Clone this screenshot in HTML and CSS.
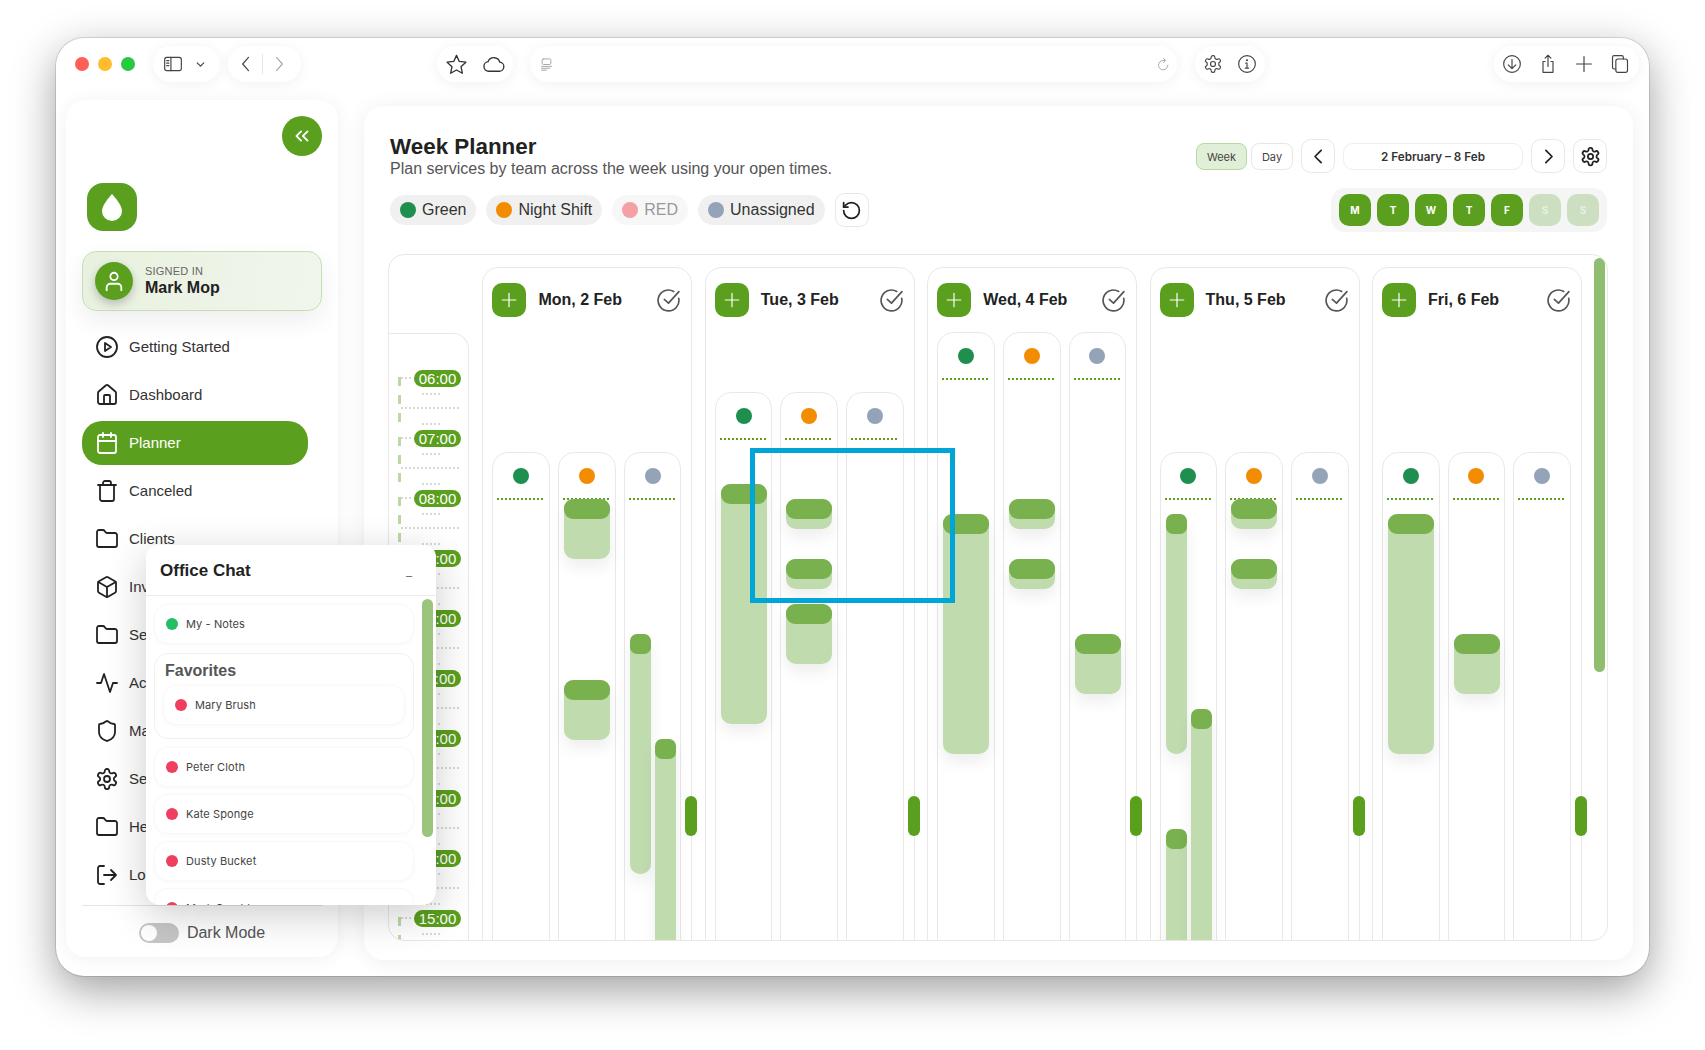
FILE: index.html
```html
<!DOCTYPE html>
<html lang="en">
<head>
    <meta charset="UTF-8">
    <meta name="viewport" content="width=device-width, initial-scale=1.0">
    <title>Week Planner</title>
    <link rel="stylesheet" href="styles.css">
</head>
<body>
    <!-- shared icons -->
    <svg class="defs" width="0" height="0">
        <symbol id="i-gear" viewBox="0 0 24 24"><path d="M12.22 2h-.44a2 2 0 0 0-2 2v.18a2 2 0 0 1-1 1.73l-.43.25a2 2 0 0 1-2 0l-.15-.08a2 2 0 0 0-2.73.73l-.22.38a2 2 0 0 0 .73 2.73l.15.1a2 2 0 0 1 1 1.72v.51a2 2 0 0 1-1 1.74l-.15.09a2 2 0 0 0-.73 2.73l.22.38a2 2 0 0 0 2.73.73l.15-.08a2 2 0 0 1 2 0l.43.25a2 2 0 0 1 1 1.73V20a2 2 0 0 0 2 2h.44a2 2 0 0 0 2-2v-.18a2 2 0 0 1 1-1.73l.43-.25a2 2 0 0 1 2 0l.15.08a2 2 0 0 0 2.73-.73l.22-.39a2 2 0 0 0-.73-2.73l-.15-.08a2 2 0 0 1-1-1.74v-.5a2 2 0 0 1 1-1.74l.15-.09a2 2 0 0 0 .73-2.73l-.22-.38a2 2 0 0 0-2.73-.73l-.15.08a2 2 0 0 1-2 0l-.43-.25a2 2 0 0 1-1-1.73V4a2 2 0 0 0-2-2z"/><circle cx="12" cy="12" r="3"/></symbol>
        <symbol id="i-folder" viewBox="0 0 24 24"><path d="M20 20a2 2 0 0 0 2-2V8a2 2 0 0 0-2-2h-7.9a2 2 0 0 1-1.69-.9L9.6 3.9A2 2 0 0 0 7.93 3H4a2 2 0 0 0-2 2v13a2 2 0 0 0 2 2Z"/></symbol>
        <symbol id="i-plus" viewBox="0 0 24 24"><path d="M12 3v18M3 12h18"/></symbol>
        <symbol id="i-check" viewBox="0 0 24 24"><path d="M21.8 10A10 10 0 1 1 17 3.3"/><path d="m8 11 4 3.5L22 3.5"/></symbol>
    </svg>

    <div class="window">
        <header class="toolbar">
            <div class="lights">
                <span class="light red"></span>
                <span class="light yellow"></span>
                <span class="light green"></span>
            </div>
            <div class="pill pill-side">
                <svg class="ico ico-tb" viewBox="0 0 24 24"><rect x="2" y="4" width="20" height="16" rx="2.5"/><path d="M9.5 4v16M4.5 8h2.5M4.5 11h2.5M4.5 14h2.5"/></svg>
                <svg class="ico ico-sm" viewBox="0 0 24 24"><path d="m6 9 6 6 6-6"/></svg>
            </div>
            <div class="pill pill-nav">
                <svg class="ico ico-tb" viewBox="0 0 24 24"><path d="m15 4-7 8 7 8"/></svg>
                <span class="pill-sep"></span>
                <svg class="ico ico-tb muted" viewBox="0 0 24 24"><path d="m9 4 7 8-7 8"/></svg>
            </div>
            <div class="pill pill-fav">
                <svg class="ico ico-fav" viewBox="0 0 24 24"><path d="m12 2.5 2.9 6.3 6.9.8-5.1 4.7 1.4 6.8-6.1-3.4-6.1 3.4 1.4-6.8-5.1-4.7 6.9-.8z"/></svg>
                <svg class="ico ico-fav" viewBox="0 0 24 24"><path d="M17.5 19H7a5 5 0 0 1-.7-9.95A6.5 6.5 0 0 1 18.6 9.6 4.7 4.7 0 0 1 17.5 19z"/></svg>
            </div>
            <div class="pill pill-url">
                <svg class="ico ico-url muted" viewBox="0 0 24 24"><rect x="5" y="3" width="14" height="9" rx="2"/><path d="M4 15h16M4 18h13M4 21h8"/></svg>
                <svg class="ico ico-url muted" viewBox="0 0 24 24"><path d="M19 13a7.5 7.5 0 1 1-7.5-7.5h3"/><path d="m12 2 3 3.5-3 3.5"/></svg>
            </div>
            <div class="pill pill-tools">
                <svg class="ico ico-tb"><use href="#i-gear"/></svg>
                <svg class="ico ico-tb" viewBox="0 0 24 24"><circle cx="12" cy="12" r="10"/><path d="M12 11v6M10 17h4M10.5 11H12"/><circle cx="12" cy="7.5" r=".6"/></svg>
            </div>
            <div class="pill pill-end">
                <svg class="ico ico-tb" viewBox="0 0 24 24"><circle cx="12" cy="12" r="10"/><path d="M12 6.5v11M7.500 13l4.500 4.500 4.500-4.500"/></svg>
                <svg class="ico ico-tb" viewBox="0 0 24 24"><path d="M8.500 9H6v13h12V9h-2.500M12 15V1.500M8.500 5 12 1.500 15.500 5"/></svg>
                <svg class="ico ico-tb"><use href="#i-plus"/></svg>
                <svg class="ico ico-tb" viewBox="0 0 24 24"><rect x="7" y="6" width="14" height="16" rx="2.500"/><path d="M7 18H5a2 2 0 0 1-2-2V4a2 2 0 0 1 2-2h9a2 2 0 0 1 2 2v2"/></svg>
            </div>
        </header>

        <div class="layout">
            <aside class="sidebar">
                <button class="collapse" type="button">
                    <svg class="ico ico-collapse" viewBox="0 0 24 24"><path d="m11 17-5-5 5-5M18 17l-5-5 5-5"/></svg>
                </button>
                <div class="logo">
                    <svg class="drop" viewBox="0 0 20 27"><path d="M10 0C10 0 0 10.500 0 17a10 10 0 0 0 20 0C20 10.500 10 0 10 0z"/></svg>
                </div>
                <div class="user-card">
                    <span class="avatar">
                        <svg class="ico ico-user" viewBox="0 0 24 24"><circle cx="12" cy="7" r="4"/><path d="M4 22v-3a4 4 0 0 1 4-4h8a4 4 0 0 1 4 4v3"/></svg>
                    </span>
                    <div>
                        <div class="user-hint">SIGNED IN</div>
                        <div class="user-name">Mark Mop</div>
                    </div>
                </div>

                <nav class="nav">
                    <a class="nav-item"><svg class="ico" viewBox="0 0 24 24"><circle cx="12" cy="12" r="10"/><path d="m10 8 6 4-6 4z"/></svg>Getting Started</a>
                    <a class="nav-item"><svg class="ico" viewBox="0 0 24 24"><path d="M15 21v-8a1 1 0 0 0-1-1h-4a1 1 0 0 0-1 1v8"/><path d="M3 10a2 2 0 0 1 .709-1.528l7-5.999a2 2 0 0 1 2.582 0l7 5.999A2 2 0 0 1 21 10v9a2 2 0 0 1-2 2H5a2 2 0 0 1-2-2z"/></svg>Dashboard</a>
                    <a class="nav-item active"><svg class="ico" viewBox="0 0 24 24"><rect x="3" y="4" width="18" height="18" rx="2"/><path d="M16 2v4M8 2v4M3 10h18"/></svg>Planner</a>
                    <a class="nav-item"><svg class="ico" viewBox="0 0 24 24"><path d="M3 6h18"/><path d="M19 6v14c0 1-1 2-2 2H7c-1 0-2-1-2-2V6"/><path d="M8 6V4c0-1 1-2 2-2h4c1 0 2 1 2 2v2"/></svg>Canceled</a>
                    <a class="nav-item"><svg class="ico"><use href="#i-folder"/></svg>Clients</a>
                    <a class="nav-item"><svg class="ico" viewBox="0 0 24 24"><path d="M21 8a2 2 0 0 0-1-1.730l-7-4a2 2 0 0 0-2 0l-7 4A2 2 0 0 0 3 8v8a2 2 0 0 0 1 1.730l7 4a2 2 0 0 0 2 0l7-4A2 2 0 0 0 21 16Z"/><path d="m3.300 7 8.700 5 8.700-5M12 22V12"/></svg>Inventory</a>
                    <a class="nav-item"><svg class="ico"><use href="#i-folder"/></svg>Services</a>
                    <a class="nav-item"><svg class="ico" viewBox="0 0 24 24"><path d="M22 12h-4l-3 9L9 3l-3 9H2"/></svg>Activity</a>
                    <a class="nav-item"><svg class="ico" viewBox="0 0 24 24"><path d="M20 13c0 5-3.500 7.500-7.660 8.950a1 1 0 0 1-.67-.01C7.500 20.500 4 18 4 13V6a1 1 0 0 1 1-1c2 0 4.500-1.200 6.240-2.720a1.170 1.170 0 0 1 1.520 0C14.510 3.810 17 5 19 5a1 1 0 0 1 1 1z"/></svg>Manage</a>
                    <a class="nav-item"><svg class="ico"><use href="#i-gear"/></svg>Settings</a>
                    <a class="nav-item"><svg class="ico"><use href="#i-folder"/></svg>Help</a>
                    <a class="nav-item"><svg class="ico" viewBox="0 0 24 24"><path d="M9 21H5a2 2 0 0 1-2-2V5a2 2 0 0 1 2-2h4"/><path d="m16 17 5-5-5-5M21 12H9"/></svg>Log out</a>
                </nav>

                <div class="dark-row">
                    <span class="toggle"><span class="knob"></span></span>
                    Dark Mode
                </div>
            </aside>

            <main class="planner">
                <div class="planner-head">
                    <div class="head-left">
                        <h1>Week Planner</h1>
                        <p class="subtitle">Plan services by team across the week using your open times.</p>
                        <div class="chips">
                            <span class="chip"><i class="dot dot-green"></i>Green</span>
                            <span class="chip"><i class="dot dot-orange"></i>Night Shift</span>
                            <span class="chip chip-off"><i class="dot dot-red"></i>RED</span>
                            <span class="chip"><i class="dot dot-grey"></i>Unassigned</span>
                            <button class="icon-btn" type="button">
                                <svg class="ico ico-btn" viewBox="0 0 24 24"><path d="M3 12a9 9 0 1 0 9-9 9.750 9.750 0 0 0-6.740 2.740L3 8"/><path d="M3 3v5h5"/></svg>
                            </button>
                        </div>
                    </div>
                    <div class="head-right">
                        <div class="controls">
                            <div class="view-switch">
                                <button class="view-btn on" type="button">Week</button>
                                <button class="view-btn" type="button">Day</button>
                            </div>
                            <button class="icon-btn" type="button"><svg class="ico ico-btn" viewBox="0 0 24 24"><path d="m15 5-7 7 7 7"/></svg></button>
                            <div class="date-range">2 February – 8 Feb</div>
                            <button class="icon-btn" type="button"><svg class="ico ico-btn" viewBox="0 0 24 24"><path d="m9 5 7 7-7 7"/></svg></button>
                            <button class="icon-btn" type="button"><svg class="ico ico-btn"><use href="#i-gear"/></svg></button>
                        </div>
                        <div class="weekdays">
                            <span class="wd">M</span>
                            <span class="wd">T</span>
                            <span class="wd">W</span>
                            <span class="wd">T</span>
                            <span class="wd">F</span>
                            <span class="wd off">S</span>
                            <span class="wd off">S</span>
                        </div>
                    </div>
                </div>

                <div class="grid">
                    <div class="times">
                        <div class="hour"><span class="time">06:00</span></div>
                        <div class="hour"><span class="time">07:00</span></div>
                        <div class="hour"><span class="time">08:00</span></div>
                        <div class="hour"><span class="time">09:00</span></div>
                        <div class="hour"><span class="time">10:00</span></div>
                        <div class="hour"><span class="time">11:00</span></div>
                        <div class="hour"><span class="time">12:00</span></div>
                        <div class="hour"><span class="time">13:00</span></div>
                        <div class="hour"><span class="time">14:00</span></div>
                        <div class="hour"><span class="time">15:00</span></div>
                    </div>

                    <div class="days">
                        <section class="day">
                            <div class="day-head">
                                <button class="add" type="button"><svg class="ico ico-plus"><use href="#i-plus"/></svg></button>
                                <span class="day-name">Mon, 2 Feb</span>
                                <svg class="ico ico-check"><use href="#i-check"/></svg>
                            </div>
                            <div class="teams start-8">
                                <div class="team"><i class="dot dot-green"></i></div>
                                <div class="team"><i class="dot dot-orange"></i>
                                    <div class="event wide" style="top:46px;height:60px"><b></b></div>
                                    <div class="event wide" style="top:227px;height:60px"><b></b></div>
                                </div>
                                <div class="team"><i class="dot dot-grey"></i>
                                    <div class="event slim" style="top:181px;height:240px"><b></b></div>
                                    <div class="event slim second" style="top:286px;height:260px"><b></b></div>
                                </div>
                            </div>
                            <span class="tab"></span>
                        </section>

                        <section class="day">
                            <div class="day-head">
                                <button class="add" type="button"><svg class="ico ico-plus"><use href="#i-plus"/></svg></button>
                                <span class="day-name">Tue, 3 Feb</span>
                                <svg class="ico ico-check"><use href="#i-check"/></svg>
                            </div>
                            <div class="teams start-7">
                                <div class="team"><i class="dot dot-green"></i>
                                    <div class="event wide" style="top:91px;height:240px"><b></b></div>
                                </div>
                                <div class="team"><i class="dot dot-orange"></i>
                                    <div class="event wide" style="top:106px;height:30px"><b></b></div>
                                    <div class="event wide" style="top:166px;height:30px"><b></b></div>
                                    <div class="event wide" style="top:211px;height:60px"><b></b></div>
                                </div>
                                <div class="team"><i class="dot dot-grey"></i></div>
                            </div>
                            <span class="tab"></span>
                        </section>

                        <section class="day">
                            <div class="day-head">
                                <button class="add" type="button"><svg class="ico ico-plus"><use href="#i-plus"/></svg></button>
                                <span class="day-name">Wed, 4 Feb</span>
                                <svg class="ico ico-check"><use href="#i-check"/></svg>
                            </div>
                            <div class="teams start-6">
                                <div class="team"><i class="dot dot-green"></i>
                                    <div class="event wide" style="top:181px;height:240px"><b></b></div>
                                </div>
                                <div class="team"><i class="dot dot-orange"></i>
                                    <div class="event wide" style="top:166px;height:30px"><b></b></div>
                                    <div class="event wide" style="top:226px;height:30px"><b></b></div>
                                </div>
                                <div class="team"><i class="dot dot-grey"></i>
                                    <div class="event wide" style="top:301px;height:60px"><b></b></div>
                                </div>
                            </div>
                            <span class="tab"></span>
                        </section>

                        <section class="day">
                            <div class="day-head">
                                <button class="add" type="button"><svg class="ico ico-plus"><use href="#i-plus"/></svg></button>
                                <span class="day-name">Thu, 5 Feb</span>
                                <svg class="ico ico-check"><use href="#i-check"/></svg>
                            </div>
                            <div class="teams start-8">
                                <div class="team"><i class="dot dot-green"></i>
                                    <div class="event slim" style="top:61px;height:240px"><b></b></div>
                                    <div class="event slim" style="top:376px;height:160px"><b></b></div>
                                    <div class="event slim second" style="top:256px;height:280px"><b></b></div>
                                </div>
                                <div class="team"><i class="dot dot-orange"></i>
                                    <div class="event wide" style="top:46px;height:30px"><b></b></div>
                                    <div class="event wide" style="top:106px;height:30px"><b></b></div>
                                </div>
                                <div class="team"><i class="dot dot-grey"></i></div>
                            </div>
                            <span class="tab"></span>
                        </section>

                        <section class="day">
                            <div class="day-head">
                                <button class="add" type="button"><svg class="ico ico-plus"><use href="#i-plus"/></svg></button>
                                <span class="day-name">Fri, 6 Feb</span>
                                <svg class="ico ico-check"><use href="#i-check"/></svg>
                            </div>
                            <div class="teams start-8">
                                <div class="team"><i class="dot dot-green"></i>
                                    <div class="event wide" style="top:61px;height:240px"><b></b></div>
                                </div>
                                <div class="team"><i class="dot dot-orange"></i>
                                    <div class="event wide" style="top:181px;height:60px"><b></b></div>
                                </div>
                                <div class="team"><i class="dot dot-grey"></i></div>
                            </div>
                            <span class="tab"></span>
                        </section>
                    </div>
                    <span class="grid-scroll"></span>
                </div>
            </main>
        </div>

        <!-- floating chat -->
        <div class="chat">
            <div class="chat-head">
                <span class="chat-title">Office Chat</span>
                <span class="chat-min">–</span>
            </div>
            <div class="chat-list">
                <div class="chat-row"><i class="status on"></i>My - Notes</div>
                <div class="favs">
                    <div class="favs-title">Favorites</div>
                    <div class="chat-row"><i class="status"></i>Mary Brush</div>
                </div>
                <div class="chat-row"><i class="status"></i>Peter Cloth</div>
                <div class="chat-row"><i class="status"></i>Kate Sponge</div>
                <div class="chat-row"><i class="status"></i>Dusty Bucket</div>
                <div class="chat-row"><i class="status"></i>Mark Scrubber</div>
            </div>
            <span class="chat-scroll"></span>
        </div>

        <!-- highlight drawn over the screenshot -->
        <div class="highlight"></div>
    </div>
</body>
</html>
```

FILE: styles.css
```css
* {
    box-sizing: border-box;
}
html, body {
    margin: 0;
    height: 1050px;
    overflow: hidden;
}
body {
    padding: 38px 56px 0;
    background-color: #fff;
    font-family: "Liberation Sans", Arial, sans-serif;
    color: #222;
}
.defs {
    position: absolute;
}
button {
    padding: 0;
    font-family: inherit;
    cursor: pointer;
}

/* icons */
.ico {
    width: 24px;
    height: 24px;
    flex: none;
    fill: none;
    stroke: currentColor;
    stroke-width: 2;
    stroke-linecap: round;
    stroke-linejoin: round;
}
.ico-tb {
    width: 20px;
    height: 20px;
    stroke-width: 1.4;
    color: #444;
}
.ico-fav {
    width: 23px;
    height: 23px;
    stroke-width: 1.4;
    color: #333;
}
.ico-sm {
    width: 13px;
    height: 13px;
    stroke-width: 2.2;
    color: #444;
}
.ico-url {
    width: 15px;
    height: 17px;
    stroke-width: 1.6;
}
.muted {
    color: #aaa;
}

/* window */
.window {
    position: relative;
    width: 1593px;
    height: 938px;
    border-radius: 28px;
    background-color: #fff;
    box-shadow: 0 0 0 1px rgba(0, 0, 0, 0.12), 0 14px 44px rgba(0, 0, 0, 0.38);
}
.toolbar {
    display: flex;
    align-items: flex-start;
    height: 62px;
    padding-top: 8px;
}
.lights {
    display: flex;
    gap: 9px;
    margin: 11px 0 0 19px;
}
.light {
    width: 14px;
    height: 14px;
    border-radius: 50%;
}
.red {
    background-color: #ff5f57;
}
.yellow {
    background-color: #febc2e;
}
.green {
    background-color: #28c840;
}
.pill {
    display: flex;
    align-items: center;
    height: 36px;
    border-radius: 18px;
    background-color: #fff;
    box-shadow: 0 2px 14px rgba(0, 0, 0, 0.06);
}
.pill-side {
    width: 67px;
    margin-left: 18px;
    padding-left: 10px;
    gap: 11px;
}
.pill-nav {
    width: 73px;
    margin-left: 8px;
    padding-left: 8px;
    gap: 6px;
}
.pill-sep {
    width: 1px;
    height: 20px;
    background-color: #e6e6e6;
}
.pill-fav {
    width: 76px;
    margin-left: 136px;
    padding-left: 8px;
    gap: 14px;
}
.pill-url {
    width: 647px;
    margin-left: 17px;
    padding: 0 6px 0 9px;
    justify-content: space-between;
}
.pill-tools {
    width: 70px;
    margin-left: 18px;
    padding-left: 8px;
    gap: 14px;
}
.pill-end {
    width: 145px;
    margin-left: 229px;
    padding-left: 8px;
    gap: 16px;
}

.layout {
    display: flex;
    align-items: flex-start;
}

/* sidebar */
.sidebar {
    display: flex;
    flex-direction: column;
    width: 272px;
    height: 857px;
    margin-left: 10px;
    border-radius: 20px;
    background-color: #fff;
    box-shadow: 0 2px 20px rgba(0, 0, 0, 0.06);
}
.collapse {
    display: flex;
    align-items: center;
    justify-content: center;
    width: 40px;
    height: 40px;
    margin: 16px 0 0 216px;
    border: none;
    border-radius: 50%;
    background-color: #5a9f1d;
    color: #fff;
}
.ico-collapse {
    width: 22px;
    height: 22px;
}
.logo {
    display: flex;
    align-items: center;
    justify-content: center;
    width: 50px;
    height: 48px;
    margin: 27px 0 0 21px;
    border-radius: 16px;
    background-color: #5a9f1d;
}
.drop {
    width: 20px;
    height: 27px;
    fill: #fff;
}
.user-card {
    display: flex;
    align-items: center;
    gap: 12px;
    width: 240px;
    height: 60px;
    margin: 20px 0 0 16px;
    padding-left: 12px;
    border: 1px solid #c5dfb2;
    border-radius: 14px;
    background: linear-gradient(100deg, #e8f1df, #f1f6ec);
    box-shadow: 0 10px 24px rgba(0, 0, 0, 0.07);
}
.avatar {
    display: flex;
    align-items: center;
    justify-content: center;
    width: 38px;
    height: 38px;
    border-radius: 50%;
    background-color: #5a9f1d;
    color: #fff;
    box-shadow: 0 4px 10px rgba(0, 0, 0, 0.22);
}
.ico-user {
    width: 22px;
    height: 22px;
}
.user-hint {
    font-size: 11px;
    line-height: 13px;
    letter-spacing: 0.2px;
    color: #666;
}
.user-name {
    font-size: 16px;
    line-height: 19px;
    font-weight: bold;
    color: #222;
}
.nav {
    display: flex;
    flex-direction: column;
    gap: 4px;
    width: 240px;
    margin: 14px 0 0 16px;
    padding-bottom: 8px;
    border-bottom: 1px solid #e4e4e4;
}
.nav-item {
    display: flex;
    align-items: center;
    gap: 10px;
    width: 226px;
    height: 44px;
    padding-left: 13px;
    border-radius: 20px;
    font-size: 15px;
    line-height: 16px;
    color: #333;
}
.nav-item .ico {
    stroke-width: 1.8;
    color: #222;
}
.nav-item.active {
    background-color: #5a9f1d;
    color: #fff;
}
.nav-item.active .ico {
    color: #fff;
}
.dark-row {
    display: flex;
    align-items: center;
    justify-content: center;
    gap: 8px;
    margin-top: 17px;
    font-size: 16px;
    color: #555;
}
.toggle {
    display: flex;
    align-items: center;
    width: 40px;
    height: 20px;
    padding-left: 2px;
    border-radius: 10px;
    background-color: #c6c6c6;
}
.knob {
    width: 16px;
    height: 16px;
    border-radius: 50%;
    background-color: #fff;
}

/* planner */
.planner {
    width: 1269px;
    height: 854px;
    margin: 6px 0 0 26px;
    padding: 29px 25px 0 24px;
    border-radius: 20px;
    background-color: #fff;
    box-shadow: 0 2px 22px rgba(0, 0, 0, 0.07);
}
.planner-head {
    display: flex;
    justify-content: space-between;
    height: 97px;
}
.head-left {
    padding-left: 2px;
}
h1 {
    margin: 0;
    font-size: 22.4px;
    line-height: 24px;
    font-weight: bold;
    color: #222;
}
.subtitle {
    margin: 0;
    font-size: 16px;
    line-height: 20px;
    color: #555;
}
.chips {
    display: flex;
    align-items: center;
    gap: 10px;
    margin-top: 14px;
}
.chip {
    display: flex;
    align-items: center;
    gap: 6px;
    height: 30px;
    padding: 0 10px;
    border-radius: 15px;
    background-color: #f0f0f0;
    font-size: 16px;
    color: #333;
}
.chip-off {
    background-color: #f7f7f7;
    color: #999;
}
.dot {
    display: block;
    width: 16px;
    height: 16px;
    border-radius: 50%;
}
.dot-green {
    background-color: #1f8f50;
}
.dot-orange {
    background-color: #f28c00;
}
.dot-red {
    background-color: #f4a0a4;
}
.dot-grey {
    background-color: #94a3b8;
}
.icon-btn {
    display: flex;
    align-items: center;
    justify-content: center;
    width: 34px;
    height: 34px;
    border: 1px solid #e8e8e8;
    border-radius: 10px;
    background-color: #fff;
    color: #222;
}
.ico-btn {
    width: 21px;
    height: 21px;
}
.head-right {
    display: flex;
    flex-direction: column;
    align-items: flex-end;
    padding: 4px 1px 0 0;
}
.controls {
    display: flex;
    align-items: center;
    gap: 8px;
}
.view-switch {
    display: flex;
    gap: 4px;
}
.view-btn {
    width: 42px;
    height: 27px;
    padding-top: 1px;
    border: 1px solid #e6e6e6;
    border-radius: 8px;
    background-color: #fff;
    font-family: Inter, sans-serif;
    font-size: 11px;
    color: #444;
}
.view-btn.on {
    width: 51px;
    border-color: #b7d8a0;
    background-color: #e2efd8;
}
.date-range {
    width: 180px;
    height: 27px;
    border: 1px solid #eee;
    border-radius: 10px;
    font-family: Inter, sans-serif;
    font-size: 11.7px;
    font-weight: 600;
    line-height: 26px;
    text-align: center;
    color: #333;
}
.weekdays {
    display: flex;
    gap: 6px;
    margin-top: 15px;
    padding: 6px 8px;
    border-radius: 14px;
    background-color: #f5f5f5;
}
.wd {
    width: 32px;
    height: 32px;
    border-radius: 10px;
    background-color: #5a9f1d;
    font-family: Inter, sans-serif;
    font-size: 10px;
    font-weight: 700;
    line-height: 32px;
    text-align: center;
    color: #fff;
}
.wd.off {
    background-color: #cddfc1;
    color: #e9f1e3;
}

/* grid */
.grid {
    position: relative;
    display: flex;
    align-items: flex-start;
    height: 687px;
    margin-top: 22px;
    border: 1px solid #e8e8e8;
    border-radius: 16px;
    overflow: hidden;
}
.times {
    flex: none;
    width: 80px;
    height: 640px;
    margin-top: 78px;
    padding-top: 36px;
    border-top: 1px solid #e8e8e8;
    border-right: 1px solid #e8e8e8;
    border-top-right-radius: 16px;
}
.hour {
    display: flex;
    justify-content: flex-end;
    align-items: flex-start;
    height: 60px;
    padding-right: 7px;
    background-image:
        repeating-linear-gradient(90deg, #d8d8d8 0 2px, transparent 2px 4px),
        repeating-linear-gradient(90deg, #d8d8d8 0 2px, transparent 2px 4px),
        repeating-linear-gradient(90deg, #d8d8d8 0 2px, transparent 2px 4px),
        repeating-linear-gradient(90deg, #d8d8d8 0 2px, transparent 2px 4px),
        repeating-linear-gradient(180deg, #bcd9a5 0 9px, transparent 9px 18px);
    background-size: 12px 2px, 18px 2px, 18px 2px, 60px 2px, 3px 60px;
    background-position: 12px 7px, 33px 23px, 33px 53px, 12px 37px, 9px 7px;
    background-repeat: no-repeat;
}
.time {
    width: 47px;
    height: 17px;
    border-radius: 9px;
    background-color: #5a9f1d;
    font-size: 15px;
    line-height: 17px;
    text-align: center;
    color: #fff;
}
.days {
    display: flex;
    gap: 12.4px;
    margin: 12px 0 0 13.4px;
}
.day {
    position: relative;
    display: flex;
    flex-direction: column;
    flex: none;
    width: 210px;
    height: 720px;
    border: 1px solid #e8e8e8;
    border-radius: 16px;
}
.day-head {
    display: flex;
    align-items: center;
    height: 34px;
    margin-top: 15px;
    padding: 0 10px 0 9px;
}
.add {
    display: flex;
    align-items: center;
    justify-content: center;
    width: 34px;
    height: 34px;
    border: none;
    border-radius: 10px;
    background-color: #5a9f1d;
    color: #fff;
}
.ico-plus {
    width: 18px;
    height: 18px;
    stroke-width: 1.6;
}
.day-name {
    flex: 1;
    margin-left: 12px;
    font-size: 16px;
    font-weight: bold;
    color: #222;
}
.ico-check {
    width: 25px;
    height: 25px;
    stroke-width: 1.6;
    color: #555;
}
.teams {
    display: flex;
    flex: 1;
    gap: 8px;
    padding: 0 10px 0 9px;
}
.start-6 {
    margin-top: 15px;
}
.start-7 {
    margin-top: 75px;
}
.start-8 {
    margin-top: 135px;
}
.team {
    position: relative;
    flex: 1;
    padding-top: 15px;
    border: 1px solid #e8e8e8;
    border-radius: 16px;
}
.team .dot {
    margin: 0 auto;
}
/* team header divider */
.team .dot::after {
    content: "";
    display: block;
    position: absolute;
    top: 45px;
    left: 4px;
    right: 4px;
    height: 2px;
    background-image: repeating-linear-gradient(90deg, #5a9f1d 0 2px, transparent 2px 4px);
}
.event {
    position: absolute;
    border-radius: 10px;
    background-color: #c0dbae;
    box-shadow: 0 8px 16px rgba(0, 0, 0, 0.07);
}
.event b {
    display: block;
    height: 20px;
    border-radius: 9px;
    background-color: #79b14e;
}
.wide {
    left: 5px;
    width: 46px;
}
.slim {
    left: 5px;
    width: 21px;
}
.slim b {
    border-radius: 7px;
}
.slim.second {
    left: 30px;
}
.tab {
    position: absolute;
    top: 528px;
    left: 202px;
    width: 12px;
    height: 40px;
    border-radius: 6px;
    background-color: #5a9f1d;
}
.grid-scroll {
    position: absolute;
    top: 3px;
    right: 2px;
    width: 11px;
    height: 414px;
    border-radius: 6px;
    background-color: #8fbe70;
}

/* chat */
.chat {
    position: absolute;
    top: 507px;
    left: 90px;
    width: 290px;
    height: 360px;
    border-radius: 12px 12px 14px 14px;
    background-color: #fff;
    box-shadow: 0 10px 40px rgba(0, 0, 0, 0.2);
    overflow: hidden;
}
.chat-head {
    display: flex;
    align-items: center;
    justify-content: space-between;
    height: 51px;
    padding: 2px 24px 0 14px;
    border-bottom: 1px solid #ececec;
}
.chat-title {
    font-size: 17px;
    font-weight: bold;
    color: #222;
}
.chat-min {
    padding-top: 8px;
    font-size: 11px;
    color: #555;
}
.chat-list {
    display: flex;
    flex-direction: column;
    gap: 7px;
    width: 268px;
    padding: 8px 0 0 8px;
}
.chat-row {
    display: flex;
    align-items: center;
    gap: 8px;
    flex: none;
    height: 40px;
    padding-left: 11px;
    border: 1px solid #f8f8f8;
    border-radius: 14px;
    background-color: #fff;
    box-shadow: 0 1px 4px rgba(0, 0, 0, 0.03);
    font-family: Inter, sans-serif;
    font-size: 11px;
    letter-spacing: 0.1px;
    color: #444;
}
.status {
    width: 12px;
    height: 12px;
    border-radius: 50%;
    background-color: #f03e5f;
}
.status.on {
    background-color: #22c063;
}
.favs {
    height: 86px;
    margin: 2px 0 1px;
    padding: 7px 8px 0;
    border: 1px solid #f0f3e8;
    border-radius: 14px;
}
.favs-title {
    margin: 0 0 4px 2px;
    font-size: 16px;
    line-height: 20px;
    font-weight: bold;
    color: #555;
}
.chat-scroll {
    position: absolute;
    top: 54px;
    right: 3px;
    width: 11px;
    height: 238px;
    border-radius: 6px;
    background-color: #9bc57d;
}

.highlight {
    position: absolute;
    top: 410px;
    left: 694px;
    width: 205px;
    height: 155px;
    border: 5px solid #00a5d8;
}
```
